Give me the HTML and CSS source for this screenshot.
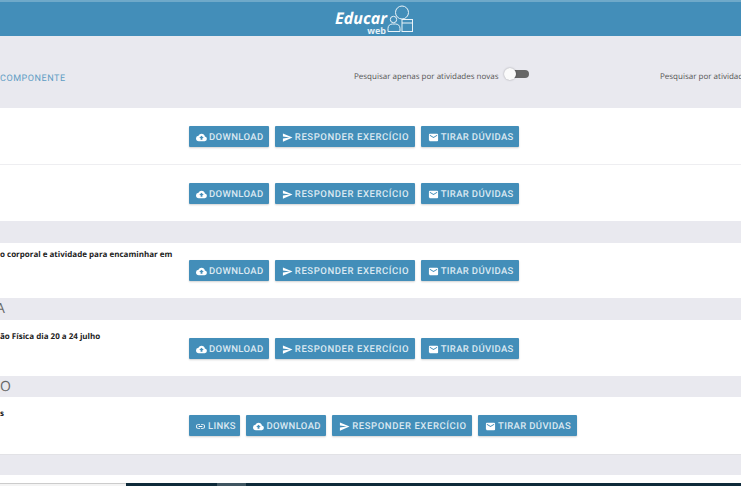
FILE: index.html
```html
<!DOCTYPE html>
<html lang="pt">
<head>
<meta charset="utf-8">
<title>Educar Web</title>
<link rel="stylesheet" href="styles.css">
</head>
<body>
<svg class="sprite" width="0" height="0" aria-hidden="true">
  <symbol id="i-cloud" viewBox="0 0 24 24"><path fill="currentColor" d="M19.35 10.04A7.49 7.49 0 0 0 12 4a7.5 7.5 0 0 0-6.65 4.04A6 6 0 0 0 6 20h13a5 5 0 0 0 .35-9.96zM14 13v4h-4v-4H7l5-5 5 5h-3z"/></symbol>
  <symbol id="i-send" viewBox="0 0 24 24"><path fill="currentColor" d="M2 21l21-9L2 3v7l15 2-15 2z"/></symbol>
  <symbol id="i-mail" viewBox="0 0 24 24"><path fill="currentColor" d="M20 4H4a2 2 0 0 0-2 2v12c0 1.1.9 2 2 2h16a2 2 0 0 0 2-2V6a2 2 0 0 0-2-2zm0 4l-8 5-8-5V6l8 5 8-5v2z"/></symbol>
  <symbol id="i-link" viewBox="0 0 24 24"><path fill="currentColor" d="M3.9 12A3.1 3.1 0 0 1 7 8.900h4V7H7a5 5 0 0 0 0 10h4v-1.900H7A3.100 3.100 0 0 1 3.900 12zM8 13h8v-2H8v2zm9-6h-4v1.900h4a3.100 3.100 0 0 1 0 6.200h-4V17h4a5 5 0 0 0 0-10z"/></symbol>
</svg>

<header class="topbar">
  <div class="logo">
    <div class="logo-words"><span class="logo-main">Educar</span><span class="logo-sub">web</span></div>
    <svg class="logo-mark" viewBox="0 0 27 28" width="27" height="28" fill="none" stroke="#eaf3f8" stroke-width="1">
      <circle cx="15" cy="7.500" r="6.500"/>
      <circle cx="6.500" cy="14.500" r="3.200" fill="#438eb9"/>
      <path d="M1 26.500v-3c0-3 2-4.500 4.500-4.500h3c2.500 0 4.500 1.500 4.500 4.500v3z" fill="#438eb9"/>
      <rect x="15" y="14.500" width="10.500" height="12" fill="#438eb9"/>
      <path d="M15 18h10.500"/>
    </svg>
  </div>
</header>

<section class="filters">
  <a class="filter-link">COMPONENTE</a>
  <div class="filter-new">
    <span>Pesquisar apenas por atividades novas</span>
    <span class="switch"><span class="switch-knob"></span></span>
  </div>
  <div class="filter-search"><span>Pesquisar por atividades</span></div>
</section>

<main>
  <article class="row">
    <p class="row-title"></p>
    <div class="actions">
      <a class="btn"><svg class="ico"><use href="#i-cloud"/></svg>DOWNLOAD</a>
      <a class="btn btn-send"><svg class="ico"><use href="#i-send"/></svg>RESPONDER EXERCÍCIO</a>
      <a class="btn"><svg class="ico"><use href="#i-mail"/></svg>TIRAR DÚVIDAS</a>
    </div>
  </article>
  <article class="row row-ruled">
    <p class="row-title"></p>
    <div class="actions">
      <a class="btn"><svg class="ico"><use href="#i-cloud"/></svg>DOWNLOAD</a>
      <a class="btn btn-send"><svg class="ico"><use href="#i-send"/></svg>RESPONDER EXERCÍCIO</a>
      <a class="btn"><svg class="ico"><use href="#i-mail"/></svg>TIRAR DÚVIDAS</a>
    </div>
  </article>

  <h2 class="band band-tall"></h2>
  <article class="row row-short">
    <p class="row-title row-title-high">o corporal e atividade para encaminhar em</p>
    <div class="actions actions-flush">
      <a class="btn"><svg class="ico"><use href="#i-cloud"/></svg>DOWNLOAD</a>
      <a class="btn btn-send"><svg class="ico"><use href="#i-send"/></svg>RESPONDER EXERCÍCIO</a>
      <a class="btn"><svg class="ico"><use href="#i-mail"/></svg>TIRAR DÚVIDAS</a>
    </div>
  </article>

  <h2 class="band band-tall band-clipped">A</h2>
  <article class="row">
    <p class="row-title">ão Física dia 20 a 24 julho</p>
    <div class="actions">
      <a class="btn"><svg class="ico"><use href="#i-cloud"/></svg>DOWNLOAD</a>
      <a class="btn btn-send"><svg class="ico"><use href="#i-send"/></svg>RESPONDER EXERCÍCIO</a>
      <a class="btn"><svg class="ico"><use href="#i-mail"/></svg>TIRAR DÚVIDAS</a>
    </div>
  </article>

  <h2 class="band">O</h2>
  <article class="row row-tall">
    <p class="row-title">s</p>
    <div class="actions actions-flush">
      <a class="btn btn-links"><svg class="ico"><use href="#i-link"/></svg>LINKS</a>
      <a class="btn"><svg class="ico"><use href="#i-cloud"/></svg>DOWNLOAD</a>
      <a class="btn btn-send"><svg class="ico"><use href="#i-send"/></svg>RESPONDER EXERCÍCIO</a>
      <a class="btn"><svg class="ico"><use href="#i-mail"/></svg>TIRAR DÚVIDAS</a>
    </div>
  </article>

  <h2 class="band band-last"></h2>
</main>

<footer class="taskbar">
  <div class="task-white"></div>
  <div class="task-gap"></div>
  <div class="task-active"></div>
  <div class="task-dark"></div>
</footer>
</body>
</html>
```
FILE: styles.css
```css
* { box-sizing: border-box; }
html, body { margin: 0; padding: 0; }
body {
  width: 741px;
  height: 486px;
  overflow: hidden;
  background: #fff;
  font-family: Roboto, "Liberation Sans", sans-serif;
  text-rendering: geometricPrecision;
  display: flex;
  flex-direction: column;
}
.sprite { position: absolute; }

.topbar {
  height: 36px;
  flex: none;
  background: #438eb9;
  border-top: 2px solid #6fa9c9;
  display: flex;
  justify-content: center;
  align-items: flex-start;
}
.logo { display: flex; align-items: flex-start; margin-left: 8px; padding-top: 3px; }
.logo-words { display: flex; flex-direction: column; align-items: flex-end; color: #fff; padding-top: 6px; }
.logo-main { font: italic 700 16px/15px "Open Sans", sans-serif; }
.logo-sub { font: 700 9px/8px "Open Sans", sans-serif; margin-right: 1px; margin-top: 1px; color: #e6f0f6; }
.logo-mark { margin-left: 0; }

.filters {
  height: 72px;
  flex: none;
  background: #e9e9ef;
  display: flex;
  align-items: center;
  white-space: nowrap;
  overflow: hidden;
  padding-top: 9px;
}
.filter-link {
  width: 354px;
  flex: none;
  color: #5f9dc4;
  font-size: 9px;
  letter-spacing: .55px;
  padding-top: 4px;
}
.filter-new {
  width: 306px;
  flex: none;
  display: flex;
  align-items: center;
  gap: 6px;
  font: 8px "Open Sans", sans-serif;
  color: #555;
}
.filter-search { flex: none; font: 8px "Open Sans", sans-serif; color: #555; }
.switch {
  width: 24px;
  height: 8px;
  margin-top: -6px;
  border-radius: 4px;
  background: #666;
  position: relative;
}
.switch-knob {
  position: absolute;
  left: -1px;
  top: -2px;
  width: 12px;
  height: 12px;
  border-radius: 50%;
  background: #fafafa;
  box-shadow: 0 0 2px rgba(0,0,0,.35);
}

.row {
  height: 56px;
  display: flex;
  background: #fff;
}
.row-ruled { border-top: 1px solid #eeeef1; height: 57px; }
.row-short { height: 55px; }
.row-tall { height: 57px; }
.row-title {
  width: 189px;
  flex: none;
  margin: 0;
  padding-top: 11px;
  font: 700 8px/11px "Open Sans", sans-serif;
  color: #222;
  white-space: nowrap;
  overflow: hidden;
}
.row-title-high { padding-top: 6px; }
.actions {
  display: flex;
  align-items: center;
  gap: 6px;
  padding-top: 1px;
}
.actions-flush { padding-top: 0; }
.btn {
  height: 21px;
  padding: 1px 5.400px 0 7px;
  display: flex;
  align-items: center;
  gap: 2px;
  background: #438eb9;
  border-radius: 1px;
  box-shadow: 0 1px 2px rgba(0,0,0,.18);
  color: #dbe9f2;
  font-size: 9.500px;
  font-weight: 500;
  letter-spacing: .35px;
  white-space: nowrap;
}
.btn-send { letter-spacing: .58px; }
.btn-links { padding: 1px 4.600px 0 6px; letter-spacing: .3px; }
.ico { width: 11px; height: 11px; flex: none; color: #fff; }

.band {
  height: 21px;
  margin: 0;
  background: #e9e9ef;
  color: #666;
  font: 400 14px/22px "Open Sans", sans-serif;
  overflow: hidden;
}
.band-tall { height: 22px; }
.band-clipped { text-indent: -4px; }
.band-last { flex: none; border-top: 1px solid #e2e2e6; }

.taskbar {
  margin-top: auto;
  height: 3px;
  flex: none;
  display: flex;
  background: #0e2a3a;
}
.task-white { width: 126px; background: #f4f4f4; border-top: 1px solid #ccc; }
.task-gap { width: 91px; }
.task-active { width: 29px; background: #3f5561; }
.task-dark { flex: 1; }
```
